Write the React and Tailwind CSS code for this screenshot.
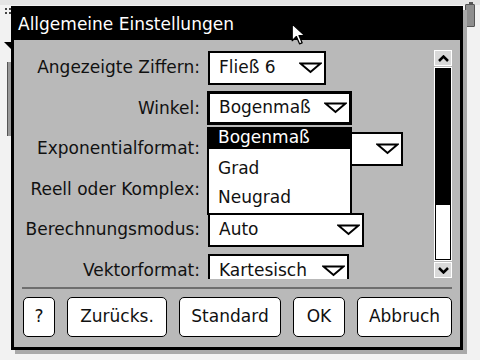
import React from "react";

const Arrow = () => (
  <svg width="23" height="12" viewBox="0 0 23 12" className="shrink-0">
    <polygon points="1.5,1.5 21.5,1.5 11.5,10" fill="white" stroke="black" strokeWidth="2" strokeLinejoin="miter" />
  </svg>
);

const Select = ({ value, className = "", focused = false, children }) => (
  <div className={`relative h-[34px] ${className}`}>
    <div
      className={`flex h-full items-center justify-between bg-white pl-[9px] pr-[2px] ${
        focused ? "border-[3px] border-black -mx-px -my-px h-[36px]" : "border-2 border-black"
      }`}
    >
      <span className="whitespace-nowrap">{value}</span>
      <Arrow />
    </div>
    {children}
  </div>
);

const Row = ({ label, children }) => (
  <div className="flex h-[34px] items-center gap-[8px]">
    <div className="w-[186px] shrink-0 text-right whitespace-nowrap">{label}</div>
    {children}
  </div>
);

const Btn = ({ label, className = "" }) => (
  <div
    className={`flex h-[40px] items-center justify-center rounded-[5px] border-[1.5px] border-black bg-white ${className}`}
  >
    {label}
  </div>
);

export default function App() {
  return (
    <div className="relative h-[360px] w-[480px] overflow-hidden bg-[#f2f2f2] font-['DejaVu_Sans',sans-serif] text-[17px] text-[#111]">
      {/* desktop bits behind the dialog */}
      <div className="absolute left-0 top-0 h-[5px] w-full bg-[#e4e4e4]" />
      <div className="absolute left-[5px] top-[8px] grid grid-cols-2 gap-[2px]">
        <span className="h-[2px] w-[2px] bg-[#444]" />
        <span className="h-[2px] w-[2px] bg-[#444]" />
        <span className="h-[2px] w-[2px] bg-[#444]" />
        <span className="h-[2px] w-[2px] bg-[#444]" />
      </div>
      <svg className="absolute left-[4px] top-[42px]" width="9" height="9" viewBox="0 0 9 9">
        <polygon points="0,0 9,0 9,9" fill="black" />
      </svg>
      <div className="absolute left-[7px] top-[62px] h-[74px] w-[6px] border-x border-[#555] bg-[#999]" />
      <div className="absolute left-[465px] top-[4px] h-[23px] w-[10px] rounded-[1px] border border-[#555] bg-[#8e8e8e]" />
      <div className="absolute left-[469px] top-[2px] h-[3px] w-[4px] bg-[#555]" />

      {/* dialog */}
      <div className="absolute left-[11px] top-[6px] flex h-[344px] w-[452px] flex-col border-[3px] border-black shadow-[4px_4px_0_#a9a9a9]">
        <div className="flex h-[31px] shrink-0 items-center bg-black pl-[4px] text-white">
          Allgemeine Einstellungen
        </div>
        <div className="flex flex-1 flex-col bg-[#b9b9b9]">
          <div className="relative flex h-[239px] shrink-0">
            <div className="flex-1 overflow-hidden">
              <div className="flex flex-col gap-[6.5px] pt-[11px]">
                <Row label="Angezeigte Ziffern:">
                  <Select value="Fließ 6" className="w-[118px]" />
                </Row>
                <Row label="Winkel:">
                  <Select value="Bogenmaß" className="w-[143px]" focused>
                    <div className="absolute left-[-1px] top-[35px] z-10 w-[145px] border-2 border-t-0 border-black bg-white">
                      <div className="flex h-[22px] items-center bg-black pl-[9px] text-white">Bogenmaß</div>
                      <div className="mt-[6px] flex h-[29px] items-center pl-[9px]">Grad</div>
                      <div className="flex h-[29px] items-center pl-[9px]">Neugrad</div>
                    </div>
                  </Select>
                </Row>
                <Row label="Exponentialformat:">
                  <Select value="" className="w-[195px]" />
                </Row>
                <Row label="Reell oder Komplex:">
                  <Select value="" className="w-[140px]" />
                </Row>
                <Row label="Berechnungsmodus:">
                  <Select value="Auto" className="w-[156px]" />
                </Row>
                <Row label="Vektorformat:">
                  <Select value="Kartesisch" className="w-[141px]" />
                </Row>
              </div>
            </div>
            {/* scrollbar */}
            <div className="mr-[8px] mt-[10px] flex h-[228px] w-[18px] flex-col">
              <div className="flex h-[16px] items-center justify-center border border-white bg-[#d9d9d9]">
                <svg width="11" height="7" viewBox="0 0 11 7">
                  <polyline points="1,6 5.5,1.5 10,6" fill="none" stroke="black" strokeWidth="2.5" />
                </svg>
              </div>
              <div className="mt-[1px] flex flex-1 flex-col border border-white">
                <div className="flex flex-1 flex-col border border-black bg-white">
                  <div className="h-[136px] bg-black" />
                </div>
              </div>
              <div className="mt-[1px] flex h-[16px] items-center justify-center border border-white bg-[#d9d9d9]">
                <svg width="11" height="7" viewBox="0 0 11 7">
                  <polyline points="1,1 5.5,5.5 10,1" fill="none" stroke="black" strokeWidth="2.5" />
                </svg>
              </div>
            </div>
          </div>
          <div className="mx-[8px] mt-[8px] h-[2px] bg-[#6e6e6e]" />
          <div className="mt-[8px] flex gap-[12px] pl-[9px]">
            <Btn label="?" className="w-[32px]" />
            <Btn label="Zurücks." className="w-[100px]" />
            <Btn label="Standard" className="w-[102px]" />
            <Btn label="OK" className="w-[52px]" />
            <Btn label="Abbruch" className="w-[95px]" />
          </div>
        </div>
      </div>

      {/* mouse pointer */}
      <svg className="absolute left-[291px] top-[23px]" width="16" height="24" viewBox="0 0 15 23">
        <path d="M1 1 L1 17 L5 13 L8 20 L10.5 19 L7.5 12 L13 12 Z" fill="white" stroke="black" strokeWidth="1.2" strokeLinejoin="round" />
      </svg>
    </div>
  );
}
